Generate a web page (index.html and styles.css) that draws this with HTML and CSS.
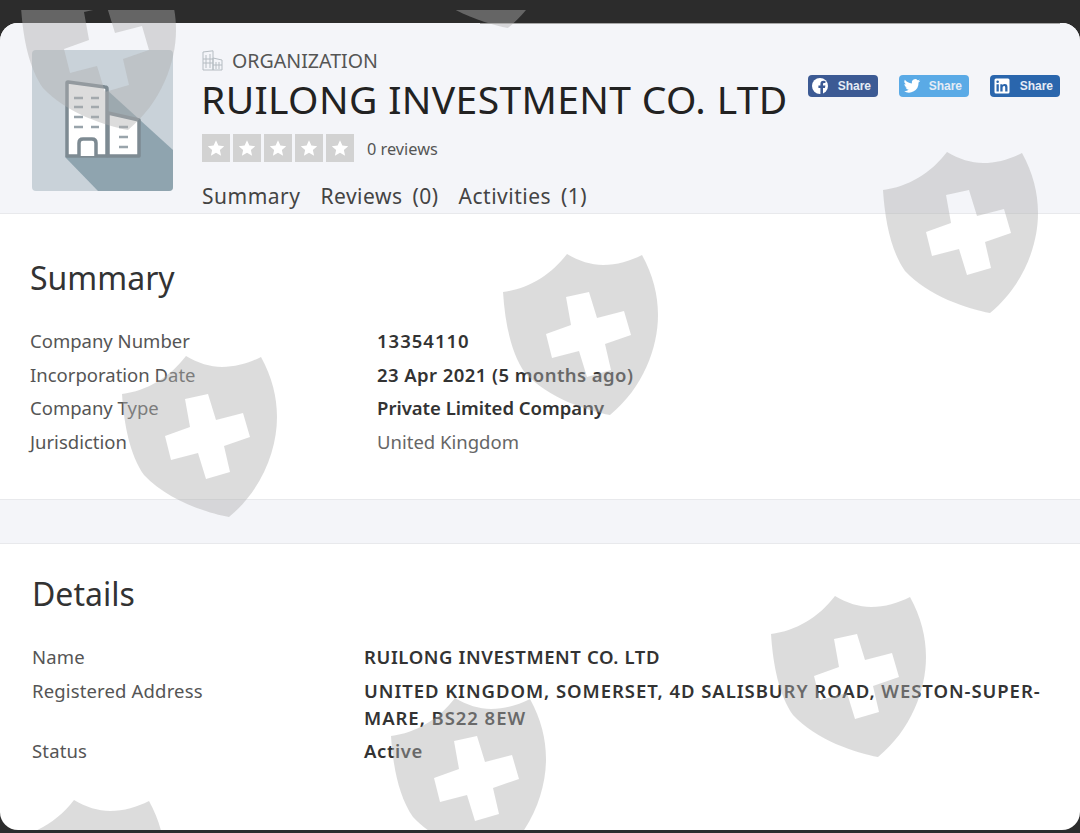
FILE: index.html
```html
<!DOCTYPE html>
<html>
<head>
<meta charset="utf-8">
<title>RUILONG INVESTMENT CO. LTD</title>
<link rel="stylesheet" href="styles.css">
</head>
<body>
<svg class="defs" width="0" height="0">
  <symbol id="shield" viewBox="0 0 156 163">
    <path fill-rule="evenodd" d="M0 39C25 36 48 22 64 1C76 8 88 12 100 12C114 12 127 8 139 2C150 22 155 42 155 62C155 95 140 135 107 162C85 158 45 145 22 120C8 100 2 70 0 39ZM63 44L86 39L94 65L121 58L128 82L102 91L108 117L84 124L76 98L49 105L43 81L68 72Z"/>
  </symbol>
  <symbol id="star" viewBox="0 0 24 24">
    <polygon points="12,3.5 14.6,9.3 21,10 16.2,14.2 17.6,20.5 12,17.2 6.4,20.5 7.8,14.2 3,10 9.4,9.3"/>
  </symbol>
</svg>

<div class="card">
  <header class="head">
    <div class="logo">
      <svg viewBox="0 0 141 141" width="141" height="141">
        <rect width="141" height="141" rx="4" fill="#c9d2d9"/>
        <path d="M75 40L141 100V137Q141 141 137 141H66L33 107Z" fill="#8fa4af"/>
        <path d="M35 33Q35 32 36 32L73 37Q75 37 75 39V106H35Z" fill="#fff" stroke="#7d8a92" stroke-width="3.5" stroke-linejoin="round"/>
        <path d="M76 63L107 70V106H76Z" fill="#fff" stroke="#7d8a92" stroke-width="3.5" stroke-linejoin="round"/>
        <path d="M47 106V93Q47 89 51 89H60Q64 89 64 93V106" fill="#fff" stroke="#7d8a92" stroke-width="3.5"/>
        <path d="M42 48H51M59 48H67M42 57H51M59 57H67M42 67H51M59 67H67M42 77H51M59 77H67M87 77H96M87 87H96M87 97H96" stroke="#99a4ab" stroke-width="2.5"/>
      </svg>
    </div>
    <div class="head-main">
      <div class="kind">
        <svg viewBox="0 0 21 21" width="21" height="21" fill="none" stroke="#b5bcc2" stroke-width="1">
          <path d="M1 20V2L11 .8V20ZM11 8L20 10V20H11ZM4 5V18M8 4V18M1 9H11M1 13H11M14 12V19M17 12V19M11 15H20"/>
        </svg>
        <span>ORGANIZATION</span>
      </div>
      <h1>RUILONG INVESTMENT CO. LTD</h1>
      <div class="rating">
        <span class="star"><svg width="22" height="22"><use href="#star"/></svg></span>
        <span class="star"><svg width="22" height="22"><use href="#star"/></svg></span>
        <span class="star"><svg width="22" height="22"><use href="#star"/></svg></span>
        <span class="star"><svg width="22" height="22"><use href="#star"/></svg></span>
        <span class="star"><svg width="22" height="22"><use href="#star"/></svg></span>
        <span class="review-count">0 reviews</span>
      </div>
      <nav class="tabs">
        <a>Summary</a>
        <a>Reviews (0)</a>
        <a>Activities (1)</a>
      </nav>
    </div>
    <div class="shares">
      <a class="share fb">
        <svg viewBox="0 0 16 16" width="16" height="16"><circle cx="8" cy="8" r="8" fill="#fff"/><path d="M11 16V10H13L13.4 7.6H11V6.2C11 5.4 11.4 5 12.2 5H13.4V3Q12.4 2.8 11.4 2.8C9.4 2.8 8.4 4 8.4 5.9V7.6H6.4V10H8.4V16Z" fill="#3c5a94"/></svg>
        Share
      </a>
      <a class="share tw">
        <svg viewBox="0 0 24 24" width="18" height="18"><path fill="#fff" d="M23 5.1c-.8.4-1.7.6-2.6.7.9-.6 1.6-1.4 2-2.5-.9.5-1.8.9-2.9 1.1a4.5 4.5 0 0 0-7.7 4.1C8 8.300 4.700 6.500 2.500 3.800a4.500 4.500 0 0 0 1.400 6c-.7 0-1.400-.2-2-.6 0 2.200 1.500 4 3.600 4.500-.7.2-1.400.2-2 .1.600 1.800 2.200 3.100 4.200 3.100A9 9 0 0 1 1 18.800 12.800 12.800 0 0 0 20.700 7.400c.9-.6 1.700-1.400 2.300-2.300z"/></svg>
        Share
      </a>
      <a class="share in">
        <svg viewBox="0 0 16 16" width="16" height="16"><rect x=".5" y=".5" width="15" height="15" rx="1.500" fill="#fff"/><path fill="#2a66ad" d="M2.500 6.200H4.800V13.500H2.500ZM3.650 2.500A1.300 1.300 0 1 1 3.650 5.100 1.300 1.300 0 0 1 3.650 2.500ZM6.300 6.200H8.500V7.200C9 6.500 9.800 6 10.800 6 12.800 6 13.500 7.200 13.500 9.300V13.500H11.200V9.800C11.200 8.800 11 8.100 10.100 8.100 9.100 8.100 8.600 8.800 8.600 9.900V13.500H6.300Z"/></svg>
        Share
      </a>
    </div>
  </header>

  <section class="panel panel-summary">
    <h2>Summary</h2>
    <dl class="facts">
      <dt>Company Number</dt><dd class="strong digits">13354110</dd>
      <dt>Incorporation Date</dt><dd class="strong dated">23 Apr 2021 (5 months ago)</dd>
      <dt>Company Type</dt><dd class="strong">Private Limited Company</dd>
      <dt>Jurisdiction</dt><dd>United Kingdom</dd>
    </dl>
  </section>

  <div class="spacer"></div>

  <section class="panel panel-details">
    <h2>Details</h2>
    <dl class="facts">
      <dt>Name</dt><dd class="strong">RUILONG INVESTMENT CO. LTD</dd>
      <dt>Registered Address</dt><dd class="strong address">UNITED KINGDOM, SOMERSET, 4D SALISBURY ROAD, WESTON-SUPER-MARE, BS22 8EW</dd>
      <dt>Status</dt><dd class="strong">Active</dd>
    </dl>
  </section>
</div>

<div class="top-line"></div>

<div class="marks">
  <svg class="mark m1"><use href="#shield"/></svg>
  <svg class="mark m2"><use href="#shield"/></svg>
  <svg class="mark m3"><use href="#shield"/></svg>
  <svg class="mark m4"><use href="#shield"/></svg>
  <svg class="mark m5"><use href="#shield"/></svg>
  <svg class="mark m6"><use href="#shield"/></svg>
  <svg class="mark m7"><use href="#shield"/></svg>
  <svg class="mark m8"><use href="#shield"/></svg>
</div>
</body>
</html>
```

FILE: styles.css
```css
* {
  box-sizing: border-box;
}

html, body {
  height: 833px;
}

body {
  margin: 0;
  padding: 23px 0 3px;
  overflow: hidden;
  background: #2c2c2c;
  font-family: "Noto Sans", sans-serif;
  color: #333;
}

.defs {
  position: absolute;
}

.card {
  height: 807px;
  border-radius: 18px;
  overflow: hidden;
  background: #fff;
}

.head {
  display: flex;
  height: 191px;
  padding: 27px 20px 0 32px;
  background: #f4f5f9;
  border-bottom: 1px solid #e8e9ec;
}

.logo {
  width: 141px;
  height: 141px;
  flex: none;
}

.head-main {
  margin-left: 29px;
  flex: none;
}

.kind {
  display: flex;
  align-items: center;
  gap: 9px;
  height: 20px;
  font-size: 19.6px;
  color: #555;
}

h1 {
  margin: 6px 0 0 -1px;
  font-size: 39px;
  line-height: 46px;
  font-weight: 400;
  letter-spacing: 0.37px;
  color: #222;
}

.rating {
  display: flex;
  align-items: center;
  margin-top: 12px;
}

.star {
  display: flex;
  align-items: center;
  justify-content: center;
  width: 28px;
  height: 28px;
  margin-right: 3px;
  background: #d2d2d2;
  fill: #fff;
}

.review-count {
  margin-left: 10px;
  padding-top: 1px;
  font-size: 16.3px;
  color: #555;
}

.tabs {
  display: flex;
  gap: 20px;
  margin-top: 20px;
  font-size: 21px;
  line-height: 28px;
  letter-spacing: 0.5px;
  word-spacing: 4px;
  color: #444;
}

.shares {
  display: flex;
  gap: 21px;
  margin-left: auto;
  margin-top: 25px;
}

.share {
  display: flex;
  align-items: center;
  justify-content: space-between;
  width: 70px;
  height: 22px;
  padding: 0 7px 0 4px;
  border-radius: 4px;
  font: bold 12px "Liberation Sans", sans-serif;
  color: #e6ecf5;
}

.fb { background: #3c5a94; }
.tw { background: #5aaae6; }
.in { background: #2a66ad; }

.panel {
  background: #fff;
}

.panel-summary {
  height: 285px;
  padding: 42px 30px 0;
}

.panel-details {
  padding: 28px 32px 0;
}

h2 {
  margin: 0;
  font-size: 32px;
  line-height: 44px;
  font-weight: 400;
  color: #333;
}

.spacer {
  height: 45px;
  background: #f4f5f9;
  border-top: 1px solid #e8e9ec;
  border-bottom: 1px solid #e8e9ec;
}

.facts {
  display: grid;
  margin: 27px 0 0;
  font-size: 18.5px;
  line-height: 27px;
  row-gap: 6.7px;
}

.panel-summary .facts {
  grid-template-columns: 347px 1fr;
}

.panel-details .facts {
  grid-template-columns: 332px 1fr;
  letter-spacing: 0.15px;
}

.panel-details dd {
  letter-spacing: 0.6px;
}

.panel-details dd.address {
  letter-spacing: 0.95px;
}

dt {
  color: #555;
}

dd {
  margin: 0;
  color: #666;
}

dd.strong {
  font-weight: 600;
  color: #333;
}

dd.digits {
  letter-spacing: 1px;
}

dd.dated {
  letter-spacing: 0.42px;
}

/* watermark laid over the whole shot */
.marks {
  position: absolute;
  left: 0;
  top: 10px;
  width: 1080px;
  height: 820px;
  overflow: hidden;
  pointer-events: none;
}

.mark {
  position: absolute;
  width: 156px;
  height: 163px;
  fill: rgba(176, 176, 176, 0.44);
}

.m1 { left: 21px; top: -42px; }
.m2 { left: 401px; top: -144px; }
.m3 { left: 883px; top: 141px; }
.m4 { left: 503px; top: 243px; }
.m5 { left: 122px; top: 345px; }
.m6 { left: 771px; top: 585px; }
.m7 { left: 391px; top: 687px; }
.m8 { left: 10px; top: 789px; }

.top-line {
  position: absolute;
  left: 480px;
  top: 23px;
  width: 580px;
  height: 1px;
  background: #a8a8a8;
}
```
